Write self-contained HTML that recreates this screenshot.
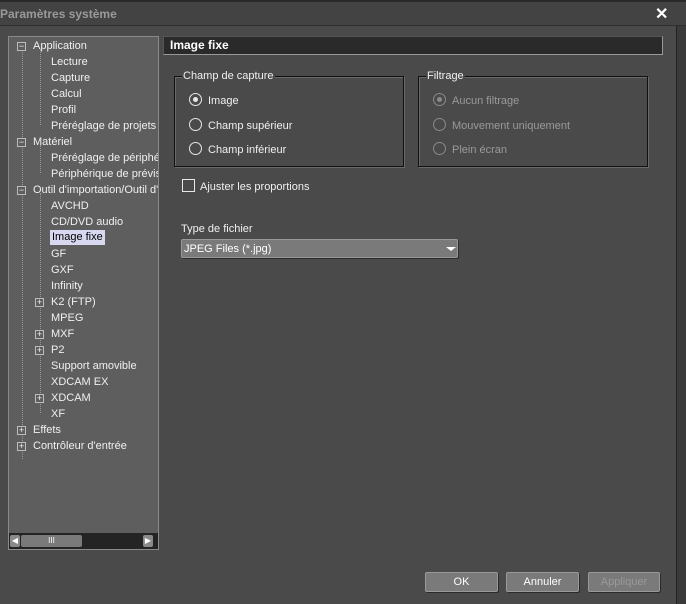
<!DOCTYPE html>
<html><head><meta charset="utf-8">
<style>
*{margin:0;padding:0;box-sizing:border-box}
body{width:686px;height:604px;background:#4a4a4a;font-family:"Liberation Sans",sans-serif;font-size:11px;color:#f0f0f0;position:relative;overflow:hidden}
.a{position:absolute;white-space:nowrap}
.title{left:0;top:0;width:686px;height:26px;background:#434343;border-bottom:1px solid #2e2e2e;border-top:2px solid #2a2a2a}
.tree{left:8px;top:36px;width:151px;height:514px;background:#5e5e5e;border:1px solid #8a8a8a;overflow:hidden}
.r{position:absolute;height:16px;line-height:16px;white-space:nowrap}
.box{position:absolute;width:9px;height:9px;border:1px solid #bdbdbd;background:#5e5e5e;font-size:9px;line-height:7px;text-align:center;color:#eee}
.vl{position:absolute;border-left:1px dotted #999}
.grp{position:absolute;border:1px solid #111;box-shadow:1px 1px 0 #6a6a6a, inset 1px 1px 0 #6a6a6a}
.lg{position:absolute;top:-7px;left:7px;background:#4a4a4a;padding:0 1px;line-height:13px}
.rad{position:absolute;width:13px;height:13px;border:1px solid #e8e8e8;border-radius:50%}
.rad.on::after{content:"";position:absolute;left:3px;top:3px;width:5px;height:5px;border-radius:50%;background:#e8e8e8}
.dis .rad{border-color:#8a8a8a}.dis .rad.on::after{background:#8a8a8a}
.btn{position:absolute;top:572px;height:20px;background:#7a7a7a;border:1px solid #999;border-radius:2px;box-shadow:1px 1px 0 #2a2a2a;text-align:center;line-height:19px;color:#fff}
</style></head><body>
<div class="a title"></div>
<div class="a" style="left:0;top:7px;color:#9a9a9a;font-weight:bold;font-size:12px">Paramètres système</div>
<div class="a" style="left:655px;top:4px;color:#fff;font-size:16px;font-weight:bold">✕</div>
<div class="a" style="left:676px;top:26px;width:10px;height:578px;background:#3a3a3a;border-left:1px solid #222"></div>

<div class="a tree">
<div class="vl" style="left:13px;top:12px;height:410px"></div>
<div class="vl" style="left:31px;top:12px;height:76px"></div>
<div class="vl" style="left:31px;top:108px;height:28px"></div>
<div class="vl" style="left:31px;top:156px;height:220px"></div>
</div>
<div class="a" style="left:9px;top:38px;width:149px;height:420px;overflow:hidden">
<div class="r" style="top:0px;left:24px">Application</div>
<div class="r" style="top:16px;left:42px">Lecture</div>
<div class="r" style="top:32px;left:42px">Capture</div>
<div class="r" style="top:48px;left:42px">Calcul</div>
<div class="r" style="top:64px;left:42px">Profil</div>
<div class="r" style="top:80px;left:42px">Préréglage de projets</div>
<div class="r" style="top:96px;left:24px">Matériel</div>
<div class="r" style="top:112px;left:42px">Préréglage de périphé</div>
<div class="r" style="top:128px;left:42px">Périphérique de prévis</div>
<div class="r" style="top:144px;left:24px">Outil d'importation/Outil d'</div>
<div class="r" style="top:160px;left:42px">AVCHD</div>
<div class="r" style="top:176px;left:42px">CD/DVD audio</div>
<div class="r" style="top:192px;left:41px;background:#d8d8f0;color:#000;padding:0 2px;height:15px;line-height:15px">Image fixe</div>
<div class="r" style="top:208px;left:42px">GF</div>
<div class="r" style="top:224px;left:42px">GXF</div>
<div class="r" style="top:240px;left:42px">Infinity</div>
<div class="r" style="top:256px;left:42px">K2 (FTP)</div>
<div class="r" style="top:272px;left:42px">MPEG</div>
<div class="r" style="top:288px;left:42px">MXF</div>
<div class="r" style="top:304px;left:42px">P2</div>
<div class="r" style="top:320px;left:42px">Support amovible</div>
<div class="r" style="top:336px;left:42px">XDCAM EX</div>
<div class="r" style="top:352px;left:42px">XDCAM</div>
<div class="r" style="top:368px;left:42px">XF</div>
<div class="r" style="top:384px;left:24px">Effets</div>
<div class="r" style="top:400px;left:24px">Contrôleur d'entrée</div>
<div class="box" style="left:8px;top:4px">−</div>
<div class="box" style="left:8px;top:100px">−</div>
<div class="box" style="left:8px;top:148px">−</div>
<div class="box" style="left:26px;top:260px">+</div>
<div class="box" style="left:26px;top:292px">+</div>
<div class="box" style="left:26px;top:308px">+</div>
<div class="box" style="left:26px;top:356px">+</div>
<div class="box" style="left:8px;top:388px">+</div>
<div class="box" style="left:8px;top:404px">+</div>
</div>
<div class="a" style="left:9px;top:533px;width:149px;height:16px;background:#242424"></div>
<div class="a" style="left:10px;top:535px;width:10px;height:12px;background:#8a8a8a;border-radius:2px;font-size:8px;line-height:12px;text-align:center;color:#fff">◀</div>
<div class="a" style="left:21px;top:535px;width:61px;height:12px;background:#7a7a7a;border-radius:2px;font-size:8px;line-height:12px;text-align:center;color:#fff">III</div>
<div class="a" style="left:143px;top:535px;width:10px;height:12px;background:#8a8a8a;border-radius:2px;font-size:8px;line-height:12px;text-align:center;color:#fff">▶</div>

<div class="a" style="left:163px;top:36px;width:500px;height:19px;background:#2a2a2a;border:1px solid #9a9a9a;border-left-color:#555;border-top-color:#555;font-weight:bold;font-size:12px;line-height:17px;padding-left:6px;color:#fff">Image fixe</div>

<div class="grp" style="left:174px;top:76px;width:230px;height:91px"><span class="lg">Champ de capture</span></div>
<div class="rad on" style="left:189px;top:93px"></div><div class="a" style="left:208px;top:95px">Image</div>
<div class="rad" style="left:189px;top:118px"></div><div class="a" style="left:208px;top:120px">Champ supérieur</div>
<div class="rad" style="left:189px;top:142px"></div><div class="a" style="left:208px;top:144px">Champ inférieur</div>

<div class="grp" style="left:418px;top:76px;width:230px;height:91px"><span class="lg">Filtrage</span></div>
<div class="dis">
<div class="rad on" style="left:433px;top:93px"></div><div class="a" style="left:452px;top:95px;color:#9a9a9a">Aucun filtrage</div>
<div class="rad" style="left:433px;top:118px"></div><div class="a" style="left:452px;top:120px;color:#9a9a9a">Mouvement uniquement</div>
<div class="rad" style="left:433px;top:142px"></div><div class="a" style="left:452px;top:144px;color:#9a9a9a">Plein écran</div>
</div>

<div class="a" style="left:182px;top:179px;width:13px;height:13px;border:1px solid #e8e8e8"></div>
<div class="a" style="left:200px;top:181px">Ajuster les proportions</div>

<div class="a" style="left:181px;top:223px">Type de fichier</div>
<div class="a" style="left:181px;top:239px;width:277px;height:19px;background:#7a7a7a;border:1px solid #999;border-radius:2px;box-shadow:1px 1px 0 #2a2a2a;line-height:18px;padding-left:2px;color:#fff">JPEG Files (*.jpg)</div>
<div class="a" style="left:446px;top:247px;width:0;height:0;border-left:5px solid transparent;border-right:5px solid transparent;border-top:4px solid #fff"></div>

<div class="btn" style="left:425px;width:73px">OK</div>
<div class="btn" style="left:506px;width:73px">Annuler</div>
<div class="btn" style="left:588px;width:72px;color:#9a9a9a">Appliquer</div>
</body></html>
